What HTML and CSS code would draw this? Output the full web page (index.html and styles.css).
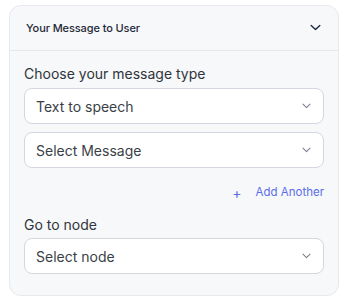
FILE: index.html
```html
<!DOCTYPE html>
<html>
<head>
<meta charset="utf-8">
<link rel="stylesheet" href="styles.css">
</head>
<body>
<div class="card">
  <div class="card-header">
    <span class="card-title">Your Message to User</span>
    <svg class="chev-lg" width="11" height="7" viewBox="0 0 11 7"><path d="M1.2 1.4 L5.5 5.4 L9.8 1.4" fill="none" stroke="#1f2a44" stroke-width="1.4" stroke-linecap="round" stroke-linejoin="round"/></svg>
  </div>
  <div class="card-body">
    <div class="label">Choose your message type</div>
    <div class="selects">
      <div class="select"><span>Text to speech</span><svg class="chev" width="9" height="6" viewBox="0 0 9 6"><path d="M1 1.2 L4.5 4.6 L8 1.2" fill="none" stroke="#7b8190" stroke-width="1.1" stroke-linecap="round" stroke-linejoin="round"/></svg></div>
      <div class="select"><span>Select Message</span><svg class="chev" width="9" height="6" viewBox="0 0 9 6"><path d="M1 1.2 L4.5 4.6 L8 1.2" fill="none" stroke="#7b8190" stroke-width="1.1" stroke-linecap="round" stroke-linejoin="round"/></svg></div>
    </div>
    <div class="add-row"><span class="plus">+</span><span>Add Another</span></div>
    <div class="label label-node">Go to node</div>
    <div class="select"><span>Select node</span><svg class="chev" width="9" height="6" viewBox="0 0 9 6"><path d="M1 1.2 L4.5 4.6 L8 1.2" fill="none" stroke="#7b8190" stroke-width="1.1" stroke-linecap="round" stroke-linejoin="round"/></svg></div>
  </div>
</div>
</body>
</html>
```
FILE: styles.css
```css
html, body { margin: 0; padding: 0; background: #ffffff; }
body { font-family: Inter, "Noto Sans", sans-serif; padding: 5px 9px 0 9px; }
.card {
  width: 330px;
  box-sizing: border-box;
  background: #f7f8fa;
  border: 1px solid #e6e8ec;
  border-radius: 12px;
}
.card-header {
  height: 44px;
  border-bottom: 1px solid #e6e8ec;
  display: flex;
  align-items: center;
  justify-content: space-between;
  padding: 0 17px 0 16px;
}
.card-title { font-size: 11px; font-weight: 500; color: #1f2937; letter-spacing: -0.1px; }
.chev-lg { margin-top: -2px; }
.card-body { padding: 13px 14px 21px 14px; display: flex; flex-direction: column; }
.label { font-size: 14px; line-height: 20px; color: #30343b; margin-bottom: 4px; }
.label-node { margin-top: 15px; margin-bottom: 3px; }
.selects { display: flex; flex-direction: column; gap: 8px; }
.select {
  height: 36px;
  box-sizing: border-box;
  background: #fff;
  border: 1px solid #d4d7de;
  border-radius: 8px;
  display: flex;
  align-items: center;
  justify-content: space-between;
  padding: 0 12px 0 11px;
  font-size: 14px;
  color: #3a3f47;
}
.add-row {
  margin-top: 16px;
  height: 16px;
  display: flex;
  align-items: center;
  justify-content: flex-end;
  gap: 14px;
  font-size: 11.5px;
  color: #5a6de8;
}
.plus { font-size: 14px; }
```
